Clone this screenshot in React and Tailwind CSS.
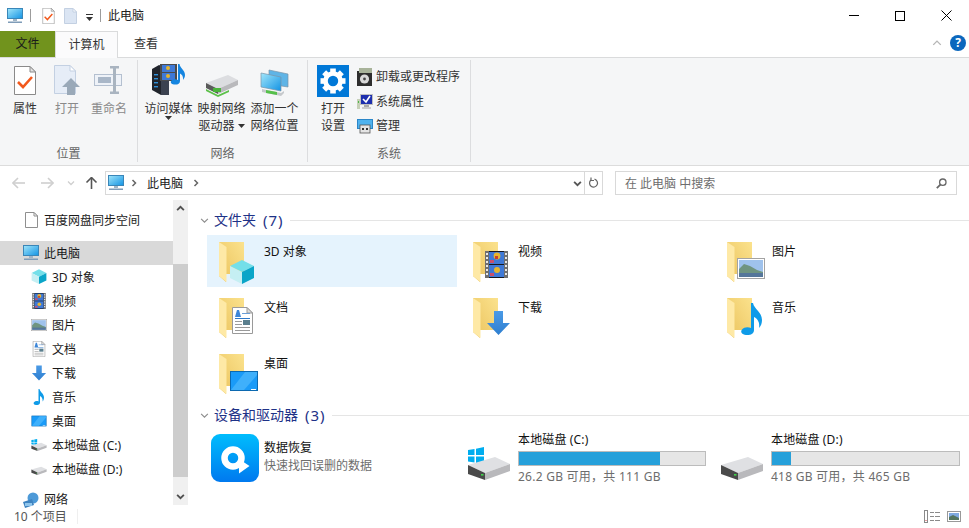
import React from "react";

// glyphs share the 48x48 folder space so the sidebar can crop them with a viewBox
const Cube = () => (
  <g>
    <polygon points="19,27 31,21 43,27 31,33" fill="#74dfe9" />
    <polygon points="19,27 31,33 31,45 19,39" fill="#c5eff3" />
    <polygon points="31,33 43,27 43,39 31,45" fill="#0aa5c8" />
  </g>
);

const Film = () => (
  <g>
    <rect x="20" y="12" width="23" height="27" fill="#6f6f6f" />
    {[14, 18, 22, 26, 30, 34].map((y) => (
      <g key={y}>
        <rect x="21" y={y} width="2" height="2" fill="#e8e8e8" />
        <rect x="40" y={y} width="2" height="2" fill="#e8e8e8" />
      </g>
    ))}
    <rect x="24" y="12" width="15" height="27" fill="#15181f" />
    <rect x="24" y="13" width="15" height="12" fill="#3f79d6" />
    <rect x="24" y="26" width="15" height="12" fill="#3f79d6" />
    <circle cx="32" cy="17" r="3.4" fill="#e6b52e" />
    <rect x="30" y="17" width="3" height="3" fill="#c9402c" />
    <circle cx="32" cy="31" r="3" fill="#e6b52e" />
    <rect x="25" y="21" width="4" height="3" fill="#c9506c" />
    <rect x="25" y="34" width="4" height="3" fill="#c9506c" />
  </g>
);

const Picture = () => (
  <g>
    <rect x="18.5" y="19.5" width="27" height="20" fill="#fff" stroke="#a3a3a3" />
    <rect x="20" y="21" width="24" height="17" fill="#9fc2ec" />
    <polygon points="20,30 25,25 31,27 38,31 44,33 44,35 20,35" fill="#6f9480" />
    <rect x="20" y="34" width="24" height="4" fill="#55769a" />
  </g>
);

const Doc = () => (
  <g>
    <polygon points="21.5,12.5 36,12.5 41.5,18 41.5,38.5 21.5,38.5" fill="#fff" stroke="#9a9a9a" />
    <polygon points="36,12.5 36,18 41.5,18" fill="#dcdcdc" stroke="#9a9a9a" />
    <polygon points="24,22 26,15 28,15 30,22" fill="#3d86d8" />
    <rect x="31" y="18" width="8" height="1" fill="#6b9ed6" />
    <rect x="24" y="23" width="15" height="1" fill="#2f79c8" />
    <rect x="24" y="26" width="7" height="1" fill="#9a9a9a" />
    <rect x="32" y="25" width="7" height="5" fill="#5b7f8e" />
    <rect x="24" y="29" width="7" height="1" fill="#9a9a9a" />
    <rect x="24" y="32" width="15" height="1" fill="#9a9a9a" />
    <rect x="24" y="35" width="15" height="1" fill="#9a9a9a" />
  </g>
);

const DownArrow = () => (
  <polygon points="29,16 38,16 38,28 45,28 33.5,40 22,28 29,28" fill="url(#arrowFill)" />
);

const Music = () => (
  <path
    d="M32 8 L34 8 C35 14 43 17 43 25 C43 28 42 31 40 33 C41 28 39 24 35 22 L35 35 C35 39 31 40.5 27 40 C23 39.5 21 37 23 34.5 C25 32 29 31.5 32 33 Z"
    fill="#0f9be8"
  />
);

const Desktop = () => (
  <g>
    <rect x="19.5" y="20.5" width="27" height="19" fill="#1a9bf8" stroke="#0c69b0" />
    <polygon points="20,39 34,21 46,21 46,24 33,39" fill="#3fb0fb" />
    <rect x="40" y="38" width="5" height="1" fill="#fff" />
  </g>
);

const Defs = () => (
  <svg width="0" height="0" className="absolute">
    <defs>
      <linearGradient id="folderBack" x1="1" y1="0" x2="0" y2="1">
        <stop offset="0" stopColor="#fbe28d" />
        <stop offset="1" stopColor="#eac25c" />
      </linearGradient>
      <linearGradient id="arrowFill" x1="0" y1="0" x2="0" y2="1">
        <stop offset="0" stopColor="#4a9ae6" />
        <stop offset="1" stopColor="#2f7fd0" />
      </linearGradient>
      <linearGradient id="screenFill" x1="0" y1="0" x2="1" y2="1">
        <stop offset="0" stopColor="#a2e6fa" />
        <stop offset="1" stopColor="#1293e4" />
      </linearGradient>
      <linearGradient id="recoverFill" x1="0" y1="0" x2="0" y2="1">
        <stop offset="0" stopColor="#00bdfd" />
        <stop offset="1" stopColor="#0079ef" />
      </linearGradient>
    </defs>
  </svg>
);

function Folder({ children }) {
  return (
    <svg width="48" height="48" viewBox="0 0 48 48" className="shrink-0">
      <polygon points="8,3 33,3 33,35 15,35 15,43 8,37" fill="url(#folderBack)" />
      <polygon points="8,3 15.5,8 15.5,43 8,37" fill="#fee9a6" />
      {children}
    </svg>
  );
}

function Crop({ box, children }) {
  return (
    <svg width="16" height="16" viewBox={box} className="shrink-0">
      {children}
    </svg>
  );
}

function PcIcon() {
  return (
    <svg width="16" height="16" viewBox="0 0 16 16" className="shrink-0">
      <rect x="0.5" y="0.5" width="15" height="10" fill="url(#screenFill)" stroke="#3a86b8" />
      <rect x="6" y="11" width="4" height="2" fill="#9fb4c6" />
      <rect x="1" y="13.5" width="14" height="1.5" fill="#7f9cb8" />
    </svg>
  );
}

function DriveIcon({ win, width = 44, height = 33 }) {
  return (
    <svg width={width} height={height} viewBox="0 0 44 33" className="shrink-0">
      {win && (
        <g fill="#00adef">
          <polygon points="1,3 7.5,2 7.5,8 1,8" />
          <polygon points="9,1.7 17,0 17,8 9,8" />
          <polygon points="1,9.5 7.5,9.5 7.5,15.5 1,14.5" />
          <polygon points="9,9.5 17,9.5 17,17.5 9,16" />
        </g>
      )}
      <polygon points="1,18 28,10 43,17 18,26" fill="#dfe0e3" />
      <polygon points="1,18 18,26 18,33 1,27" fill="#4a4a4a" />
      <polygon points="18,26 43,17 43,24 18,33" fill="#b9b9bc" />
      <rect x="14" y="27" width="2.5" height="1.6" fill="#3fd44a" />
    </svg>
  );
}

function Line({ className }) {
  return <div className={className} />;
}

function PropsIcon({ small, className }) {
  return (
    <svg width={small ? 13 : 22} height={small ? 16 : 29} viewBox="0 0 22 29" className={`shrink-0 ${className || ""}`}>
      <polygon points="0.5,0.5 16,0.5 21.5,6 21.5,28.5 0.5,28.5" fill="#fff" stroke="#8a8a8a" />
      <polygon points="16,0.5 16,6 21.5,6" fill="#e2e2e2" stroke="#8a8a8a" />
      <polyline points="4,16 9,21 18,11" fill="none" stroke="#f2591d" strokeWidth="2.6" />
    </svg>
  );
}

function BlankDoc({ stroke = "#c3d0e2", fill = "#dbe5f3", w = 13, h = 16 }) {
  return (
    <svg width={w} height={h} viewBox="0 0 13 16" className="shrink-0">
      <polygon points="0.5,0.5 9,0.5 12.5,4 12.5,15.5 0.5,15.5" fill={fill} stroke={stroke} />
      <polygon points="9,0.5 9,4 12.5,4" fill="#fff" stroke={stroke} />
    </svg>
  );
}

function OpenIcon() {
  return (
    <svg width="28" height="30" viewBox="0 0 28 30" className="mb-[2px]">
      <polygon points="1.5,0.5 17,0.5 22.5,6 22.5,28.5 1.5,28.5" fill="#e6edf7" stroke="#c3d0e2" />
      <polygon points="17,0.5 17,6 22.5,6" fill="#fff" stroke="#c3d0e2" />
      <polygon points="18,13 27,22 22,22 22,30 14,30 14,22 9,22" fill="#9aa9b8" />
    </svg>
  );
}

function RenameIcon() {
  return (
    <svg width="30" height="28" viewBox="0 0 30 28" className="mb-[3px]">
      <rect x="0.5" y="8.5" width="27" height="11" fill="#eef2f8" stroke="#b4c0d0" />
      <rect x="4" y="11" width="13" height="6" fill="#a9b7c8" />
      <rect x="19" y="2" width="3" height="24" fill="#a9b4c0" />
      <rect x="16" y="0" width="9" height="2.5" fill="#a9b4c0" />
      <rect x="16" y="25.5" width="9" height="2.5" fill="#a9b4c0" />
    </svg>
  );
}

function MediaIcon() {
  return (
    <svg width="33" height="31" viewBox="0 0 33 31" className="mb-[2px]">
      <polygon points="0,5 7,1 17,5 17,31 9,31 0,26" fill="#20242c" />
      <polygon points="9,9 17,6 17,31 9,31" fill="#3b4250" />
      {[10, 14, 18, 22].map((y) => (
        <rect key={y} x="2" y={y} width="4" height="1.4" fill="#2f8fd8" />
      ))}
      <rect x="8" y="0" width="17" height="17" fill="#4b4b4b" />
      <rect x="10" y="1" width="13" height="7" fill="#3f79d6" />
      <rect x="10" y="9" width="13" height="7" fill="#3f79d6" />
      <circle cx="16" cy="4" r="2" fill="#e6b52e" />
      <circle cx="16" cy="12" r="2" fill="#e6b52e" />
      <path d="M26 0 L27.5 0 C28 4 33 6 33 11 C33 13 32 14.5 31 16 C31.5 12.5 30 10.5 28 9.5 L28 17 C28 20 25 21 22 20.5 C19 20 18 18 19.5 16.5 C21 15 24 14.8 26 16 Z" fill="#1585e0" />
    </svg>
  );
}

function MapDriveIcon() {
  return (
    <svg width="34" height="23" viewBox="0 0 34 23">
      <polygon points="1,9 23,1 33,6 13,15" fill="#dcdde0" />
      <polygon points="1,9 13,15 13,20 1,14" fill="#5a5a5a" />
      <polygon points="13,15 33,6 33,11 13,20" fill="#b9b9bc" />
      <polygon points="1,15 13,21 24,16 24,18 13,23 1,17" fill="#5cc04a" />
      <rect x="8" y="14" width="8" height="4" fill="#49b43a" />
    </svg>
  );
}

function NetPlaceIcon() {
  return (
    <svg width="29" height="28" viewBox="0 0 29 28">
      <polygon points="9,1 28,5 28,18 9,15" fill="#5fb4e6" stroke="#7a93a8" strokeWidth="0.7" />
      <polygon points="1,4 21,8 21,22 1,18" fill="url(#screenFill)" stroke="#7a93a8" strokeWidth="0.7" />
      <polygon points="2,20 21,24 24,22 24,24 21,27 2,23" fill="#c6c9cc" />
      <polygon points="6,21 17,23 17,26 6,24" fill="#56c04a" />
    </svg>
  );
}

function GearIcon() {
  const teeth = [0, 45, 90, 135, 180, 225, 270, 315];
  return (
    <div className="w-8 h-8 bg-[#0078d7] flex items-center justify-center">
      <svg width="26" height="26" viewBox="0 0 26 26">
        {teeth.map((a) => (
          <rect key={a} x="10.2" y="0.5" width="5.6" height="6" fill="#fff" transform={`rotate(${a} 13 13)`} />
        ))}
        <circle cx="13" cy="13" r="7.5" fill="none" stroke="#fff" strokeWidth="4.6" />
      </svg>
    </div>
  );
}

function UninstallIcon() {
  return (
    <svg width="16" height="18" viewBox="0 0 16 18">
      <rect x="0" y="3" width="15" height="15" fill="#2e2e2e" />
      <rect x="2" y="0" width="13" height="5" fill="#a8b39a" />
      <circle cx="7.5" cy="11" r="4.6" fill="#d8d8d8" />
      <circle cx="7.5" cy="11" r="1.4" fill="#444" />
    </svg>
  );
}

function SysPropsIcon() {
  return (
    <svg width="16" height="16" viewBox="0 0 16 16">
      <rect x="0" y="5" width="3" height="10" fill="#c6d0b8" />
      <rect x="1" y="7" width="1" height="2" fill="#4cb848" />
      <rect x="3.5" y="0.5" width="12" height="10" fill="#1e2fae" stroke="#c0c0c0" />
      <polyline points="6,5 9,8 13,2" fill="none" stroke="#fff" strokeWidth="1.6" />
      <rect x="7" y="11" width="5" height="2" fill="#aaa" />
      <rect x="5" y="13" width="9" height="2" fill="#ccc" />
    </svg>
  );
}

function ManageIcon() {
  return (
    <svg width="16" height="15" viewBox="0 0 16 15">
      <rect x="0.5" y="0.5" width="15" height="9" fill="#4fb2ee" stroke="#2b86c8" />
      <rect x="3" y="6" width="10" height="8" fill="#e4e4e4" stroke="#555" strokeWidth="0.8" />
      <rect x="5" y="9" width="2" height="2" fill="#333" />
      <rect x="9" y="9" width="2" height="2" fill="#333" />
    </svg>
  );
}

function RecoverIcon() {
  return (
    <svg width="48" height="48" viewBox="0 0 48 48" className="shrink-0">
      <rect width="48" height="48" rx="9" fill="url(#recoverFill)" />
      <circle cx="22" cy="24" r="8.5" fill="none" stroke="#fff" strokeWidth="6.5" />
      <polygon points="28,25 38.5,32 28,39.5" fill="#fff" />
    </svg>
  );
}

function NetworkIcon() {
  return (
    <svg width="16" height="16" viewBox="0 0 16 16" className="shrink-0">
      <circle cx="10" cy="6" r="5.5" fill="#4d9ad8" />
      <polygon points="0,10 9,7 11,13 2,16" fill="#3e83c0" />
      <rect x="2" y="11" width="7" height="3" fill="#8fc5ec" />
    </svg>
  );
}

function Chevron({ dir = "right", className, size = 8, stroke = "currentColor", sw = 1.3 }) {
  const pts = {
    right: "2.5,1 5.5,4 2.5,7",
    down: "1,2.5 4,5.5 7,2.5",
    up: "1,5.5 4,2.5 7,5.5",
  }[dir];
  return (
    <svg width={size} height={size} viewBox="0 0 8 8" className={className}>
      <polyline points={pts} fill="none" stroke={stroke} strokeWidth={sw} />
    </svg>
  );
}

function NavArrow({ dir, color, className }) {
  return (
    <svg width="13" height="12" viewBox="0 0 13 12" className={className}>
      <g transform={dir === "right" ? "rotate(180 6.5 6)" : dir === "up" ? "rotate(90 6.5 6)" : undefined}>
        <polyline points="6,1 1,6 6,11" fill="none" stroke={color} strokeWidth="1.6" />
        <line x1="1.5" y1="6" x2="13" y2="6" stroke={color} strokeWidth="1.6" />
      </g>
    </svg>
  );
}

function Caret({ className }) {
  return (
    <svg width="7" height="4" viewBox="0 0 7 4" className={className}>
      <polygon points="0,0 7,0 3.5,4" fill="#333" />
    </svg>
  );
}

function RibbonButton({ icon, lines, width, dim, caret }) {
  return (
    <div className={`flex flex-col items-center pt-[5px] ${width}`}>
      <div className="h-[35px] flex items-end justify-center pb-[3px]">{icon}</div>
      {lines.map((l, i) => (
        <div key={l} className={`leading-[17px] whitespace-nowrap flex items-center gap-[3px] ${dim ? "text-[#8a8a8a]" : "text-[#333]"}`}>
          {l}
          {caret === "inline" && i === lines.length - 1 && <Caret />}
        </div>
      ))}
      {caret === "below" && <Caret className="mt-[-1px]" />}
    </div>
  );
}

function RibbonGroup({ label, width, children, pad }) {
  return (
    <div className={`h-[102px] mt-[2px] flex flex-col border-r border-[#dcdddf] ${width}`}>
      <div className={`flex-1 flex ${pad}`}>{children}</div>
      <div className="text-center leading-[17px] text-[#666]">{label}</div>
    </div>
  );
}

function SmallAction({ icon, label }) {
  return (
    <div className="h-[24.5px] flex items-center text-[#333] whitespace-nowrap">
      <div className="w-[19px] flex items-center">{icon}</div>
      {label}
    </div>
  );
}

function SideRow({ icon, label, child, active }) {
  return (
    <div className={`h-6 flex items-center whitespace-nowrap text-[#1a1a1a] ${child ? "pl-[31px]" : "pl-[23px]"} ${active ? "bg-[#d9d9d9]" : ""}`}>
      {icon}
      <span className="ml-[5px] leading-[17px]">{label}</span>
    </div>
  );
}

function SectionHead({ label, count }) {
  return (
    <div className="h-5 flex items-center">
      <Chevron dir="down" size={9} stroke="#8c8c8c" sw={1} />
      <span className="ml-[5px] text-[14px] leading-5 text-[#1e3287] whitespace-nowrap">{label}</span>
      <span className="ml-[7px] text-[15px] tracking-[1px] leading-5 text-[#1e3287] whitespace-nowrap">{count}</span>
      <div className="flex-1 h-px bg-[#e5e5e5] ml-[6px]" />
    </div>
  );
}

function FolderItem({ glyph, label, hover }) {
  return (
    <div className={`h-[52px] flex pl-1 pt-1 ${hover ? "bg-[#e5f3fd]" : ""}`}>
      <Folder>{glyph}</Folder>
      <span className="ml-[5px] mt-[4px] leading-[17px] text-[#111] whitespace-nowrap">{label}</span>
    </div>
  );
}

function DriveItem({ win, name, used, info, barWidth }) {
  return (
    <div className="h-[56px] flex">
      <div className="w-[57px] pr-[7px] pt-[18px] flex justify-end">
        <DriveIcon win={win} />
      </div>
      <div className={`pt-[2px] ${barWidth}`}>
        <div className="leading-[17px] tracking-[0.15px] text-[#111] whitespace-nowrap">{name}</div>
        <div className="h-[15px] mt-[3px] border border-[#bcbcbc] bg-[#e6e6e6]">
          <div className="h-full bg-[#26a0da]" style={{ width: `${used}%` }} />
        </div>
        <div className="mt-[2px] leading-[17px] tracking-[0.25px] text-[#6d6d6d] whitespace-nowrap">{info}</div>
      </div>
    </div>
  );
}

export default function App() {
  return (
    <div className="w-[969px] h-[528px] overflow-hidden bg-white text-[12px] font-['Noto_Sans','Noto_Sans_CJK_SC',sans-serif]">
      <Defs />

      {/* title bar */}
      <div className="h-[31px] flex items-center pl-[7px]">
        <PcIcon />
        <Line className="ml-[7px] w-px h-[13px] bg-[#9c9c9c]" />
        <div className="ml-[11px] flex"><PropsIcon small /></div>
        <div className="ml-[9px] flex"><BlankDoc /></div>
        <div className="ml-[8px] flex flex-col items-center gap-[2px] w-[8px] mt-[3px]">
          <div className="w-[7px] h-px bg-[#333]" />
          <Caret />
        </div>
        <Line className="ml-[7px] w-px h-[13px] bg-[#9c9c9c]" />
        <span className="ml-[7px] leading-[17px] text-[#222]">此电脑</span>
        <div className="ml-auto flex h-full">
          <div className="w-[46px] flex items-center justify-center">
            <div className="w-[10px] h-px bg-black" />
          </div>
          <div className="w-[46px] flex items-center justify-center">
            <div className="w-[10px] h-[10px] border border-black" />
          </div>
          <div className="w-[46px] flex items-center justify-center">
            <svg width="11" height="11" viewBox="0 0 11 11">
              <path d="M0.5 0.5 L10.5 10.5 M10.5 0.5 L0.5 10.5" stroke="#000" strokeWidth="1" />
            </svg>
          </div>
        </div>
      </div>

      {/* tabs */}
      <div className="h-[27px] flex border-b border-[#dadbdc] relative">
        <div className="w-[55px] h-[26px] bg-[#71931d] flex items-center justify-center text-[#1a1a1a]">文件</div>
        <div className="w-[63px] h-[27px] bg-[#fbfbfc] border border-b-0 border-[#dadbdc] flex items-center justify-center text-[#333]">计算机</div>
        <div className="w-[56px] h-[26px] flex items-center justify-center text-[#333]">查看</div>
        <div className="ml-auto flex items-center pr-[3px] pb-[2px]">
          <Chevron dir="up" size={10} stroke="#b5b5b5" sw={1.1} />
          <div className="ml-[8px] w-[16px] h-[16px] rounded-full bg-[#0b67bd] text-white flex items-center justify-center text-[12px] font-bold leading-none">?</div>
        </div>
      </div>

      {/* ribbon */}
      <div className="h-[108px] bg-[#f5f6f7] border-b border-[#dcdcdc] flex">
        <RibbonGroup label="位置" width="w-[138px]" pad="pl-[6px] gap-[4px]">
          <RibbonButton width="w-[38px]" icon={<PropsIcon className="mb-[2px]" />} lines={["属性"]} />
          <RibbonButton width="w-[38px]" dim icon={<OpenIcon />} lines={["打开"]} />
          <RibbonButton width="w-[38px]" dim icon={<RenameIcon />} lines={["重命名"]} />
        </RibbonGroup>
        <RibbonGroup label="网络" width="w-[170px]" pad="pl-[4px]">
          <RibbonButton width="w-[53px]" icon={<MediaIcon />} lines={["访问媒体"]} caret="below" />
          <RibbonButton width="w-[53px]" icon={<MapDriveIcon />} lines={["映射网络", "驱动器"]} caret="inline" />
          <RibbonButton width="w-[53px]" icon={<NetPlaceIcon />} lines={["添加一个", "网络位置"]} />
        </RibbonGroup>
        <RibbonGroup label="系统" width="w-[163px]" pad="pl-[7px]">
          <RibbonButton width="w-[36px]" icon={<GearIcon />} lines={["打开", "设置"]} />
          <div className="ml-[6px] pt-[5px] flex flex-col">
            <SmallAction icon={<UninstallIcon />} label="卸载或更改程序" />
            <SmallAction icon={<SysPropsIcon />} label="系统属性" />
            <SmallAction icon={<ManageIcon />} label="管理" />
          </div>
        </RibbonGroup>
      </div>

      {/* address row */}
      <div className="h-[34px] flex items-center pl-[12px]">
        <NavArrow dir="left" color="#cfcfcf" />
        <NavArrow dir="right" color="#cfcfcf" className="ml-[16px]" />
        <Chevron dir="down" stroke="#cfcfcf" className="ml-[13px]" />
        <NavArrow dir="up" color="#555" className="ml-[10px]" />
        <div className="ml-[7px] w-[498px] h-6 border border-[#d9d9d9] flex items-center pl-[2px] text-[#222]">
          <PcIcon />
          <Chevron stroke="#666" className="ml-[6px]" sw={1.5} />
          <span className="ml-[9px] leading-[17px]">此电脑</span>
          <Chevron stroke="#666" className="ml-[9px]" sw={1.5} />
          <div className="ml-auto flex items-center h-full">
            <Chevron dir="down" size={9} stroke="#555" sw={1.6} />
            <div className="ml-[2px] w-px h-full bg-[#d9d9d9]" />
            <div className="w-[17px] flex justify-center">
              <svg width="11" height="12" viewBox="0 0 11 12">
                <path d="M6.5 2.2 A4 4 0 1 1 3 3" fill="none" stroke="#666" strokeWidth="1.2" />
                <polyline points="3,0.5 3,3.5 6,3.5" fill="none" stroke="#666" strokeWidth="1.2" />
              </svg>
            </div>
          </div>
        </div>
        <div className="ml-[12px] w-[342px] h-6 border border-[#d9d9d9] flex items-center pl-[9px] pr-[9px] text-[#6d6d6d]">
          <span className="leading-[17px]">在 此电脑 中搜索</span>
          <svg width="11" height="11" viewBox="0 0 11 11" className="ml-auto">
            <circle cx="6.8" cy="4.2" r="3.2" fill="none" stroke="#666" strokeWidth="1.3" />
            <line x1="4.4" y1="6.6" x2="0.8" y2="10.2" stroke="#666" strokeWidth="1.7" />
          </svg>
        </div>
      </div>

      {/* main */}
      <div className="h-[305px] flex">
        <div className="w-[173px] pt-[8px]">
          <SideRow icon={<div className="w-4 flex justify-center"><BlankDoc stroke="#8f8f8f" fill="#fff" /></div>} label="百度网盘同步空间" />
          <div className="h-[9px]" />
          <SideRow active icon={<PcIcon />} label="此电脑" />
          <SideRow child icon={<Crop box="18 21 26 25"><Cube /></Crop>} label="3D 对象" />
          <SideRow child icon={<Crop box="18 12 27 27"><Film /></Crop>} label="视频" />
          <SideRow child icon={<Crop box="18 16 28 27"><Picture /></Crop>} label="图片" />
          <SideRow child icon={<Crop box="18 12 27 27"><Doc /></Crop>} label="文档" />
          <SideRow child icon={<Crop box="21 15 25 26"><DownArrow /></Crop>} label="下载" />
          <SideRow child icon={<Crop box="17 8 32 32"><Music /></Crop>} label="音乐" />
          <SideRow child icon={<Crop box="18 16 30 28"><Desktop /></Crop>} label="桌面" />
          <SideRow child icon={<DriveIcon win width={16} height={12} />} label="本地磁盘 (C:)" />
          <SideRow child icon={<DriveIcon width={16} height={12} />} label="本地磁盘 (D:)" />
          <div className="h-[12px]" />
          <div className="h-[13px] flex items-center pl-[23px] text-[#1a1a1a]">
            <NetworkIcon />
            <span className="ml-[5px] leading-[13px]">网络</span>
          </div>
        </div>

        <div className="w-[15px] bg-[#f0f0f0] flex flex-col">
          <div className="h-[17px] flex items-center justify-center">
            <Chevron dir="up" size={9} stroke="#505050" sw={1.6} />
          </div>
          <div className="h-[47px]" />
          <div className="h-[213px] bg-[#cdcdcd]" />
          <div className="flex-1 flex items-end justify-center pb-[4px]">
            <Chevron dir="down" size={9} stroke="#505050" sw={1.6} />
          </div>
        </div>

        <div className="flex-1 pl-[12px] pt-[10px]">
          <SectionHead label="文件夹" count="(7)" />
          <div className="mt-[5px] pl-[7px] grid grid-cols-[254px_254px_254px] gap-y-[4px]">
            <div className="w-[250px]"><FolderItem hover glyph={<Cube />} label="3D 对象" /></div>
            <div className="w-[250px]"><FolderItem glyph={<Film />} label="视频" /></div>
            <div className="w-[250px]"><FolderItem glyph={<Picture />} label="图片" /></div>
            <div className="w-[250px]"><FolderItem glyph={<Doc />} label="文档" /></div>
            <div className="w-[250px]"><FolderItem glyph={<DownArrow />} label="下载" /></div>
            <div className="w-[250px]"><FolderItem glyph={<Music />} label="音乐" /></div>
            <div className="w-[250px]"><FolderItem glyph={<Desktop />} label="桌面" /></div>
          </div>
          <div className="h-[6px]" />
          <SectionHead label="设备和驱动器" count="(3)" />
          <div className="mt-[4px] pl-[7px] grid grid-cols-[254px_253px_246px]">
            <div className="h-[56px] flex pl-1 pt-[5px]">
              <RecoverIcon />
              <div className="ml-[5px] pt-[5px]">
                <div className="leading-[17px] text-[#111]">数据恢复</div>
                <div className="mt-[1px] leading-[17px] text-[#6d6d6d]">快速找回误删的数据</div>
              </div>
            </div>
            <DriveItem win name="本地磁盘 (C:)" used={76} info="26.2 GB 可用，共 111 GB" barWidth="w-[188px]" />
            <DriveItem name="本地磁盘 (D:)" used={10} info="418 GB 可用，共 465 GB" barWidth="w-[189px]" />
          </div>
        </div>
      </div>

      {/* status bar */}
      <div className="h-[23px] flex items-center pl-[14px] text-[#555]">
        <span className="leading-[17px] w-[63px]">10 个项目</span>
        <div className="w-px h-[15px] bg-[#efefef]" />
        <div className="ml-auto flex items-center pr-[8px]">
          <svg width="16" height="13" viewBox="0 0 16 13">
            <rect x="0.5" y="0.5" width="3" height="12" fill="#fff" stroke="#8a8a8a" />
            <rect x="1.5" y="10" width="1" height="1" fill="#d04040" />
            <rect x="6" y="2" width="4" height="1" fill="#8a8a8a" />
            <rect x="11" y="2" width="5" height="1" fill="#8a8a8a" />
            <rect x="6" y="6" width="4" height="1" fill="#8a8a8a" />
            <rect x="11" y="6" width="5" height="1" fill="#8a8a8a" />
            <rect x="6" y="10" width="4" height="1" fill="#8a8a8a" />
            <rect x="11" y="10" width="5" height="1" fill="#8a8a8a" />
          </svg>
          <svg width="14" height="11" viewBox="0 0 14 11" className="ml-[7px]">
            <rect x="0.5" y="0.5" width="13" height="10" fill="#fff" stroke="#999" />
            <rect x="2" y="2" width="10" height="7" fill="#7fa9e0" />
            <polygon points="2,6 6,4 12,7 12,9 2,9" fill="#54755f" />
          </svg>
        </div>
      </div>
    </div>
  );
}
